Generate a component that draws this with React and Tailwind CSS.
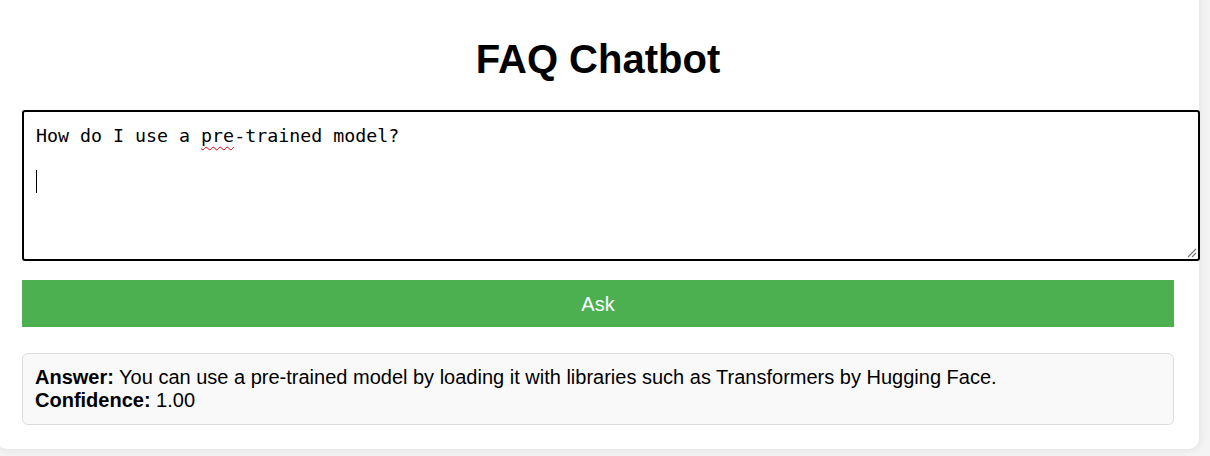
export default function App() {
  return (
    <div className="h-[456px] overflow-hidden bg-[#f4f4f4] font-['Liberation_Sans',Arial,sans-serif] text-black">
      <div className="mt-[-20px] ml-[-3px] w-[1202px] rounded-[10px] bg-white px-[25px] pt-[56px] pb-[24px] shadow-[0_0_10px_rgba(0,0,0,0.1)]">
        <h1 className="text-center text-[40px] font-bold leading-[46px]">
          FAQ Chatbot
        </h1>

        {/* question box */}
        <div className="relative mt-[28px] h-[151px] w-[1178px] rounded-[3px] border-2 border-black px-[12px] py-[12px] font-['DejaVu_Sans_Mono',monospace] text-[18.3px] leading-[23px]">
          <div>
            How do I use a{" "}
            <span className="underline decoration-red-600 decoration-wavy decoration-1 underline-offset-[4px]">
              pre
            </span>
            -trained model?
          </div>
          <div className="h-[23px]"></div>
          <div className="h-[23px]">
            <span className="inline-block h-[23px] w-px bg-black align-top"></span>
          </div>
          <svg
            className="absolute right-[1px] bottom-[1px]"
            width="12"
            height="12"
            viewBox="0 0 12 12"
          >
            <path d="M11 3 L3 11 M11 7 L7 11" stroke="#777" strokeWidth="1.2" />
          </svg>
        </div>

        <button className="mt-[19px] h-[47px] w-full bg-[#4caf50] text-[20px] text-white">
          Ask
        </button>

        <div className="mt-[26px] rounded-[6px] border border-[#ddd] bg-[#f9f9f9] p-[12px] text-[20px] leading-[23px]">
          <div>
            <b>Answer:</b> You can use a pre-trained model by loading it with
            libraries such as Transformers by Hugging Face.
          </div>
          <div>
            <b>Confidence:</b> 1.00
          </div>
        </div>
      </div>
    </div>
  );
}
